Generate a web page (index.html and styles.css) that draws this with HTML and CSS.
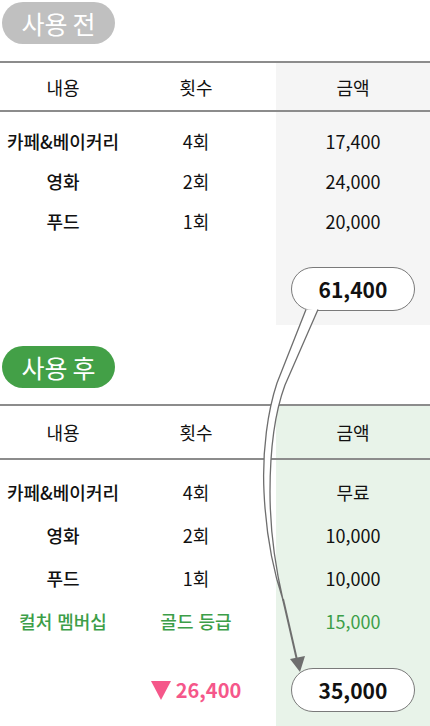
FILE: index.html
```html
<!DOCTYPE html>
<html lang="ko">
<head>
<meta charset="utf-8">
<title>사용 전 / 사용 후</title>
<link rel="stylesheet" href="styles.css">
</head>
<body>
<div class="page">
  <section class="block before">
    <div class="pill pill-gray">사용 전</div>
    <div class="table table-gray">
      <div class="row head"><span>내용</span><span>횟수</span><span>금액</span></div>
      <div class="body">
        <div class="row"><span class="name">카페&amp;베이커리</span><span>4회</span><span>17,400</span></div>
        <div class="row"><span class="name">영화</span><span>2회</span><span>24,000</span></div>
        <div class="row"><span class="name">푸드</span><span>1회</span><span>20,000</span></div>
      </div>
      <div class="row total"><span></span><span></span><span class="cell-bubble"><span class="bubble">61,400</span></span></div>
    </div>
  </section>

  <section class="block after">
    <div class="pill pill-green">사용 후</div>
    <div class="table table-green">
      <div class="row head"><span>내용</span><span>횟수</span><span>금액</span></div>
      <div class="body body-after">
        <div class="row"><span class="name">카페&amp;베이커리</span><span>4회</span><span>무료</span></div>
        <div class="row"><span class="name">영화</span><span>2회</span><span>10,000</span></div>
        <div class="row"><span class="name">푸드</span><span>1회</span><span>10,000</span></div>
        <div class="row green"><span class="name">컬처 멤버십</span><span class="name">골드 등급</span><span>15,000</span></div>
      </div>
      <div class="row total total-after">
        <span></span>
        <span class="saving"><span class="tri"></span>26,400</span>
        <span class="cell-bubble"><span class="bubble">35,000</span></span>
      </div>
    </div>
  </section>

  <svg class="arrow" width="430" height="726" viewBox="0 0 430 726" aria-hidden="true">
    <path d="M306,309.5 L277,383 C268,410 262,450 264,492 C266,535 273,570 283,600 C276,570 270,535 270,492 C270,452 275,412 285,385 L318,309.5" fill="#fff" stroke="#6e6e6e" stroke-width="1.3" stroke-linejoin="round"/>
    <path d="M283,599 L297,660" fill="none" stroke="#6e6e6e" stroke-width="2"/>
    <polygon points="290,659 305,656 300,672" fill="#6e6e6e"/>
  </svg>
</div>
</body>
</html>
```

FILE: styles.css
```css
html, body {
  margin: 0;
  padding: 0;
  background: #ffffff;
}

body {
  font-family: "Noto Sans CJK KR", "Noto Sans", sans-serif;
  color: #111111;
}

.page {
  position: relative;
  width: 430px;
  height: 726px;
  overflow: hidden;
}

.block {
  display: flex;
  flex-direction: column;
  align-items: flex-start;
}

.before {
  padding-top: 2px;
}

.after {
  padding-top: 21px;
}

.pill {
  box-sizing: border-box;
  display: flex;
  align-items: center;
  justify-content: center;
  width: 113px;
  height: 42px;
  margin-left: 2px;
  border-radius: 21px;
  color: #ffffff;
  font-size: 25px;
  line-height: 1;
  word-spacing: -2px;
}

.pill-gray {
  background: #c0c0c0;
}

.pill-green {
  background: #43a047;
}

.table {
  align-self: stretch;
  margin-top: 17px;
}

.after .table {
  margin-top: 16px;
}

.table-gray {
  background: linear-gradient(to right, transparent 276px, #f5f5f5 276px);
}

.table-green {
  background: linear-gradient(to right, transparent 276px, #e8f3e9 276px);
  padding-bottom: 30px;
}

.row {
  display: grid;
  grid-template-columns: 126px 140px 164px;
  align-items: center;
  font-size: 18px;
  line-height: 1;
}

.row > span {
  display: flex;
  justify-content: center;
  align-items: center;
}

.row > span:nth-child(3) {
  padding-left: 10px;
}

.head {
  height: 47px;
  border-top: 2px solid #8c8c8c;
  border-bottom: 2px solid #8c8c8c;
}

.after .head {
  height: 52px;
}

.body {
  padding-top: 9px;
}

.body .row {
  height: 40px;
}

.body-after {
  padding-top: 10px;
}

.body-after .row {
  height: 43px;
}

.name {
  font-weight: 500;
}

.green {
  color: #3c9e48;
}

.total {
  margin-top: 26px;
  padding-bottom: 14px;
}

.total-after {
  padding-bottom: 0;
}

.bubble {
  box-sizing: border-box;
  display: flex;
  align-items: center;
  justify-content: center;
  width: 124px;
  height: 44px;
  border: 1px solid #7a7a7a;
  border-radius: 22px;
  background: #ffffff;
  font-weight: 700;
  font-size: 21px;
}

.saving {
  color: #f5578a;
  font-weight: 700;
  font-size: 20px;
  gap: 5px;
}

.tri {
  width: 0;
  height: 0;
  border-left: 10.5px solid transparent;
  border-right: 10.5px solid transparent;
  border-top: 19px solid #f5578a;
}

.arrow {
  position: absolute;
  top: 0;
  left: 0;
  pointer-events: none;
}
```
